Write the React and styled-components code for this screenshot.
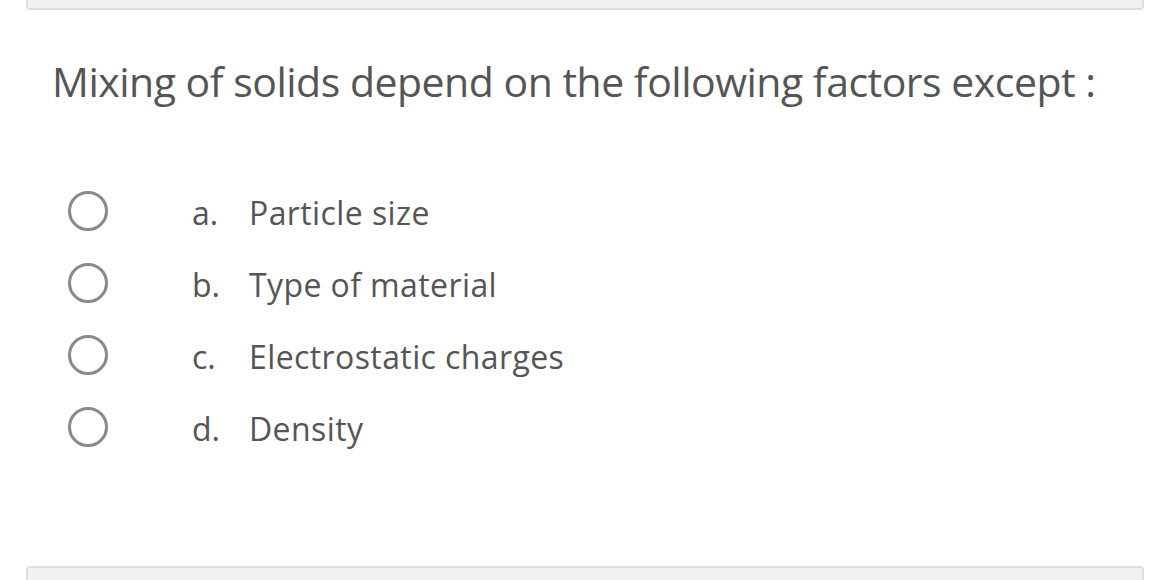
import React from 'react';
import styled, { createGlobalStyle } from 'styled-components';

const Global = createGlobalStyle`
	html, body {
		margin: 0;
		padding: 0;
		background: #ffffff;
	}
	body {
		font-family: 'Open Sans', 'Noto Sans', sans-serif;
		color: #555555;
	}
`;

const Page = styled.div`
	width: 1170px;
	height: 580px;
	overflow: hidden;
	display: flex;
	flex-direction: column;
`;

const CardEdge = styled.div`
	margin: 0 26px;
	height: ${(p) => p.$h}px;
	background: #f1f1f1;
	border: 2px solid #dedede;
	border-top: ${(p) => (p.$top ? '2px solid #dedede' : 'none')};
	border-bottom: ${(p) => (p.$top ? 'none' : '2px solid #dcdcdc')};
	border-radius: ${(p) => (p.$top ? '4px 4px 0 0' : '0 0 4px 4px')};
	box-sizing: border-box;
	flex-shrink: 0;
`;

const Question = styled.div`
	padding: 45px 0 0 52px;
	font-size: 41px;
	line-height: 52px;
	color: #555555;
	letter-spacing: -0.5px;
`;

const Options = styled.ul`
	list-style: none;
	margin: 0;
	padding: 84px 0 0 68px;
	display: flex;
	flex-direction: column;
	gap: 32px;
`;

const Option = styled.li`
	display: flex;
	align-items: center;
	height: 40px;
`;

const Radio = styled.span`
	width: 40px;
	height: 40px;
	box-sizing: border-box;
	border: 3px solid #8a8a8a;
	border-radius: 50%;
	flex-shrink: 0;
`;

const Letter = styled.span`
	margin-left: 84px;
	width: 57px;
	font-size: 32px;
	color: #555555;
	transform: translateY(1px);
`;

const Label = styled.span`
	font-size: 32px;
	letter-spacing: 0.4px;
	color: #555555;
	transform: translateY(1px);
`;

const Spacer = styled.div`
	flex: 1;
`;

const options = [
	['a.', 'Particle size'],
	['b.', 'Type of material'],
	['c.', 'Electrostatic charges'],
	['d.', 'Density'],
];

export default function App() {
	return (
		<Page>
			<Global />
			<CardEdge $h={10} />
			<Question>Mixing of solids depend on the following factors except :</Question>
			<Options>
				{options.map(([l, t]) => (
					<Option key={l}>
						<Radio />
						<Letter>{l}</Letter>
						<Label>{t}</Label>
					</Option>
				))}
			</Options>
			<Spacer />
			<CardEdge $top $h={14} />
		</Page>
	);
}
